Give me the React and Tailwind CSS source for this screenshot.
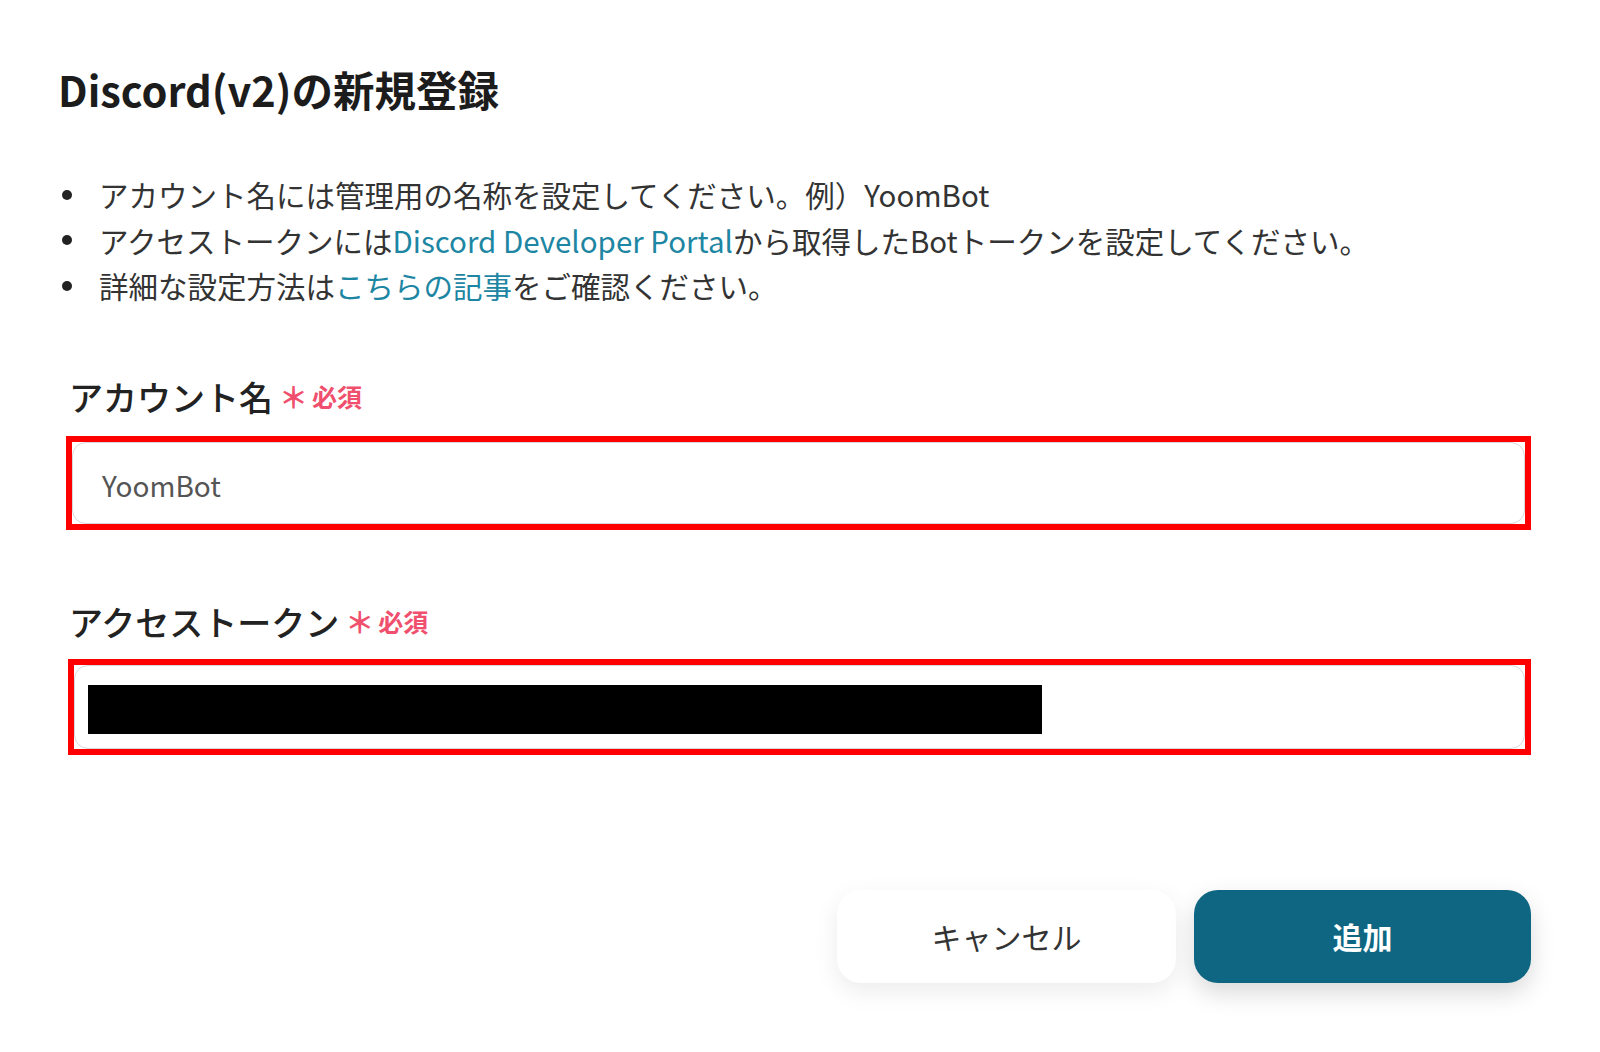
import React from 'react';

const notes = [
  { parts: [{ t: 'アカウント名には管理用の名称を設定してください。例）YoomBot' }] },
  {
    parts: [
      { t: 'アクセストークンには' },
      { t: 'Discord Developer Portal', link: true },
      { t: 'から取得したBotトークンを設定してください。' },
    ],
  },
  {
    parts: [
      { t: '詳細な設定方法は' },
      { t: 'こちらの記事', link: true },
      { t: 'をご確認ください。' },
    ],
  },
];

function FieldLabel({ children }) {
  return (
    <div className="flex items-center pl-[3px] h-[44px]">
      <span className="text-[34px] leading-[44px] font-medium text-[#222]">{children}</span>
      <span className="ml-[6px] text-[29px] leading-none font-bold text-[#f0506e]">＊</span>
      <span className="ml-[4px] text-[25px] leading-none font-bold text-[#f0506e]">必須</span>
    </div>
  );
}

export default function App() {
  return (
    <div className="min-h-screen w-full bg-white text-[#222] font-['Noto_Sans_CJK_JP','Noto_Sans',sans-serif]">
      <div className="pl-[58px] pr-[69px] pt-[64px]">
        <h1 className="text-[41.5px] leading-[50px] font-bold text-[#1c1c1c]">Discord(v2)の新規登録</h1>

        {/* notes */}
        <ul className="mt-[58px]">
          {notes.map((n, i) => (
            <li key={i} className="flex items-center h-[45.5px]">
              <span className="ml-[4px] w-[10px] h-[10px] rounded-full bg-[#222] shrink-0" />
              <span className="ml-[27px] text-[29.5px] leading-[45px] text-[#333] whitespace-nowrap">
                {n.parts.map((p, j) =>
                  p.link ? (
                    <span key={j} className="text-[#1d86a3]">{p.t}</span>
                  ) : (
                    <span key={j}>{p.t}</span>
                  )
                )}
              </span>
            </li>
          ))}
        </ul>

        <div className="ml-[8px]">
          <div className="mt-[66px]">
            <FieldLabel>アカウント名</FieldLabel>
          </div>
          <div className="mt-[17px] h-[94px] border-[6px] border-[#ff0000]">
            <div className="h-full rounded-[14px] border border-[#d8d8dc] bg-white flex items-center pl-[29px] pt-[4px]">
              <span className="text-[28px] text-[#555]">YoomBot</span>
            </div>
          </div>

          <div className="mt-[70px]">
            <FieldLabel>アクセストークン</FieldLabel>
          </div>
          <div className="mt-[15px] ml-[2px] h-[96px] border-[6px] border-[#ff0000]">
            <div className="h-full rounded-[14px] border border-[#d8d8dc] bg-white pl-[13px] pt-[19px]">
              <div className="w-[954px] h-[49px] bg-black" />
            </div>
          </div>

          {/* actions */}
          <div className="mt-[135px] flex justify-end gap-[18px]">
            <button className="w-[339px] h-[93px] rounded-[24px] bg-white shadow-[0_8px_24px_rgba(0,0,0,0.08)] text-[30px] text-[#333]">
              キャンセル
            </button>
            <button className="w-[337px] h-[93px] rounded-[24px] bg-[#0e6682] shadow-[0_10px_24px_rgba(0,0,0,0.15)] text-[30px] font-semibold text-white">
              追加
            </button>
          </div>
        </div>
      </div>
    </div>
  );
}
